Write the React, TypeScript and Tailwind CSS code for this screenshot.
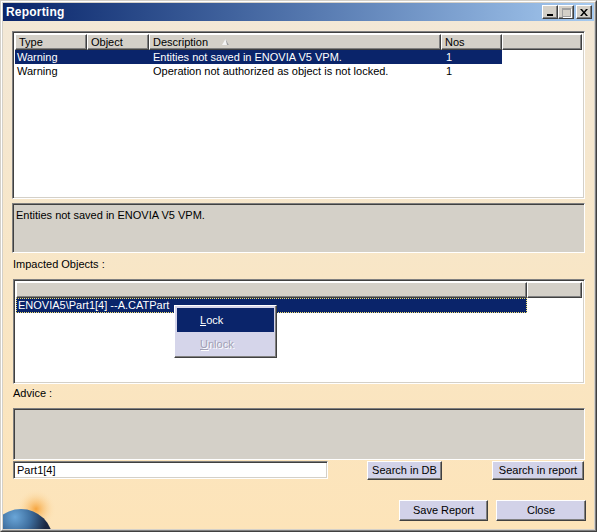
import React from 'react';

const raised =
  'border border-t-white border-l-white border-b-[#404040] border-r-[#404040] shadow-[inset_-1px_-1px_0_#808080]';
const sunken =
  'border border-t-[#808080] border-l-[#808080] border-b-white border-r-white shadow-[inset_1px_1px_0_#404040,inset_-1px_-1px_0_#d4d0c8]';
const btn = `${raised} bg-[#d2d2e8] flex items-center justify-center text-[11px] text-black`;

const cols = [
  { label: 'Type', w: 'w-[72px]' },
  { label: 'Object', w: 'w-[62px]' },
  { label: 'Description', w: 'w-[292px]', sort: true },
  { label: 'Nos', w: 'w-[61px]' },
  { label: '', w: 'flex-1' },
];

const rows = [
  { type: 'Warning', obj: '', desc: 'Entities not saved in ENOVIA V5 VPM.', nos: '1', sel: true },
  { type: 'Warning', obj: '', desc: 'Operation not authorized as object is not locked.', nos: '1', sel: false },
];

const TitleButton = ({ children }: { children: React.ReactNode }) => (
  <div className={`${raised} w-[16px] h-[14px] bg-[#d4d0c8] flex items-center justify-center`}>{children}</div>
);

const App = () => {
  return (
    <div
      className="w-[597px] h-[532px] bg-[#d4d0c8] border border-t-[#d4d0c8] border-l-[#d4d0c8] border-b-[#404040] border-r-[#404040] flex flex-col overflow-hidden"
      style={{ fontFamily: '"Liberation Sans", Arial, sans-serif' }}
    >
      <div className="flex-1 flex flex-col border-t border-l border-t-white border-l-white border-b border-r border-b-[#808080] border-r-[#808080] p-[1px]">
        {/* title bar */}
        <div className="h-[18px] shrink-0 bg-gradient-to-r from-[#0a246a] to-[#a6caf0] flex items-center pl-[3px] pr-[2px]">
          <span className="text-white font-bold text-[12px] tracking-[0.2px]">Reporting</span>
          <div className="ml-auto flex items-center">
            <TitleButton>
              <div className="w-[6px] h-[2px] bg-black mt-[6px] mr-[1px]" />
            </TitleButton>
            <TitleButton>
              <div className="w-[9px] h-[9px] border border-[#a0a0a0] border-t-2 shadow-[1px_1px_0_white]" />
            </TitleButton>
            <div className="w-[2px]" />
            <TitleButton>
              <svg width="8" height="7" viewBox="0 0 8 7">
                <path d="M0 0h2l2 2.5L6 0h2L5 3.5 8 7H6L4 4.5 2 7H0l3-3.5z" fill="#000" />
              </svg>
            </TitleButton>
          </div>
        </div>

        {/* client area */}
        <div className="relative flex-1 bg-gradient-to-b from-[#f3e8d6] via-[#f8e6c6] to-[#fde4b9] pl-[9px] pr-[9px] pt-[10px] text-[11px] text-black">
          {/* report table */}
          <div className={`${sunken} h-[168px] bg-white p-[2px] flex flex-col`}>
            <div className="flex h-[16px]">
              {cols.map((c, i) => (
                <div key={i} className={`${raised} ${c.w} bg-[#d4d0c8] pl-[3px] flex items-center relative`}>
                  {c.label}
                  {c.sort && (
                    <svg className="absolute left-[72px] top-[4px]" width="7" height="6" viewBox="0 0 7 6">
                      <path d="M3.5 0L7 6H0z" fill="#f4f4f4" />
                      <path d="M3.5 0L7 6H5z" fill="#a0a0a0" />
                    </svg>
                  )}
                </div>
              ))}
            </div>
            {rows.map((r, i) => (
              <div
                key={i}
                className={`flex h-[14px] items-center w-[487px] ${r.sel ? 'bg-[#0a246a] text-white' : 'text-black'}`}
              >
                <div className="w-[72px] pl-[2px]">{r.type}</div>
                <div className="w-[62px] pl-[2px]">{r.obj}</div>
                <div className="w-[292px] pl-[4px] whitespace-nowrap">{r.desc}</div>
                <div className="w-[61px] pl-[5px]">{r.nos}</div>
              </div>
            ))}
          </div>

          {/* description box */}
          <div className={`${sunken} mt-[4px] h-[50px] bg-[#d4d0c8] pl-[3px] pt-[3px]`}>Entities not saved in ENOVIA V5 VPM.</div>

          <div className="h-[26px] pl-[1px] pt-[3px]">Impacted Objects :</div>

          {/* impacted objects */}
          <div className={`${sunken} ml-[1px] h-[105px] bg-white p-[2px] flex flex-col`}>
            <div className="flex h-[16px]">
              <div className={`${raised} w-[511px] bg-[#d4d0c8]`} />
              <div className={`${raised} flex-1 bg-[#d4d0c8]`} />
            </div>
            <div className="h-[15px] w-[511px] bg-[#0a246a] text-white pl-[2px] flex items-center outline-1 outline-dotted outline-[#f0e070] -outline-offset-1">
              ENOVIA5\Part1[4] --A.CATPart
            </div>
          </div>

          <div className="h-[24px] pl-[1px] pt-[1px]">Advice :</div>

          <div className={`${sunken} ml-[1px] h-[52px] bg-[#d4d0c8]`} />

          <div className="flex items-center h-[19px] ml-[1px] mt-[1px]">
            <div className={`${sunken} w-[315px] h-[18px] self-start bg-white pl-[3px] flex items-center`}>Part1[4]</div>
            <div className={`${btn} ml-[39px] w-[75px] h-[19px]`}>Search in DB</div>
            <div className={`${btn} ml-[50px] w-[92px] h-[19px]`}>Search in report</div>
          </div>

          <div className="flex justify-end mt-[20px]">
            <div className={`${btn} w-[89px] h-[21px]`}>Save Report</div>
            <div className={`${btn} ml-[8px] w-[90px] h-[21px] mr-[-1px]`}>Close</div>
          </div>

          {/* globe decoration */}
          <svg className="absolute left-0 bottom-0" width="70" height="40" viewBox="0 0 70 40">
            <defs>
              <radialGradient id="glow" cx="33" cy="20" r="20" gradientUnits="userSpaceOnUse">
                <stop offset="0" stopColor="#f59a28" stopOpacity="0.85" />
                <stop offset="0.45" stopColor="#f8b860" stopOpacity="0.45" />
                <stop offset="1" stopColor="#fde4b9" stopOpacity="0" />
              </radialGradient>
              <radialGradient id="earth" cx="12" cy="28" r="32" gradientUnits="userSpaceOnUse">
                <stop offset="0" stopColor="#6aa6d8" />
                <stop offset="0.5" stopColor="#3e6e9e" />
                <stop offset="1" stopColor="#1a2640" />
              </radialGradient>
            </defs>
            <circle cx="33" cy="20" r="20" fill="url(#glow)" />
            <circle cx="18" cy="52" r="32" fill="url(#earth)" />
          </svg>

          {/* context menu */}
          <div className={`absolute left-[171px] top-[284px] w-[103px] h-[53px] bg-[#d5d5ea] ${raised} border-t-[#d4d0c8] border-l-[#d4d0c8] p-[2px]`}>
            <div className="h-[24px] bg-[#0a246a] text-white pl-[23px] flex items-center">
              <span className="underline underline-offset-1">L</span>ock
            </div>
            <div className="h-[24px] text-[#a0a0b4] pl-[23px] flex items-center [text-shadow:1px_1px_0_white]">
              <span className="underline underline-offset-1">U</span>nlock
            </div>
          </div>
        </div>
      </div>
    </div>
  );
};

export default App;
